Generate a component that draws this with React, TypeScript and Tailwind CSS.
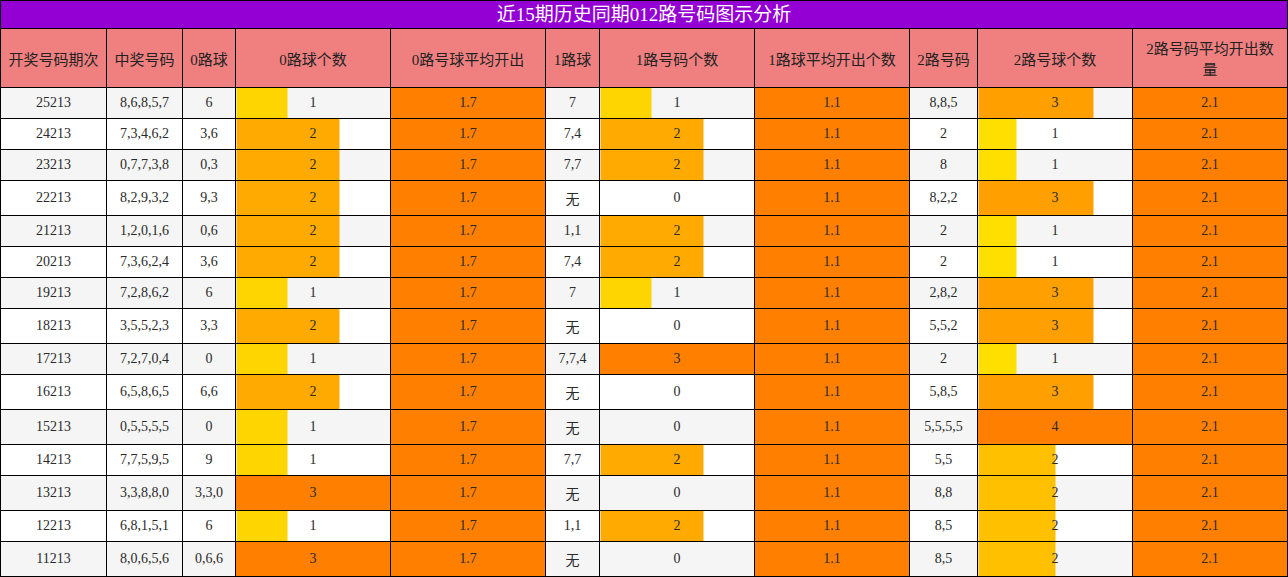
type Row = {
  issue: string
  nums: string
  r0: string
  c0: number
  r1: string
  c1: number
  r2: string
  c2: number
}

const rows: Row[] = [
  { issue: '25213', nums: '8,6,8,5,7', r0: '6', c0: 1, r1: '7', c1: 1, r2: '8,8,5', c2: 3 },
  { issue: '24213', nums: '7,3,4,6,2', r0: '3,6', c0: 2, r1: '7,4', c1: 2, r2: '2', c2: 1 },
  { issue: '23213', nums: '0,7,7,3,8', r0: '0,3', c0: 2, r1: '7,7', c1: 2, r2: '8', c2: 1 },
  { issue: '22213', nums: '8,2,9,3,2', r0: '9,3', c0: 2, r1: '无', c1: 0, r2: '8,2,2', c2: 3 },
  { issue: '21213', nums: '1,2,0,1,6', r0: '0,6', c0: 2, r1: '1,1', c1: 2, r2: '2', c2: 1 },
  { issue: '20213', nums: '7,3,6,2,4', r0: '3,6', c0: 2, r1: '7,4', c1: 2, r2: '2', c2: 1 },
  { issue: '19213', nums: '7,2,8,6,2', r0: '6', c0: 1, r1: '7', c1: 1, r2: '2,8,2', c2: 3 },
  { issue: '18213', nums: '3,5,5,2,3', r0: '3,3', c0: 2, r1: '无', c1: 0, r2: '5,5,2', c2: 3 },
  { issue: '17213', nums: '7,2,7,0,4', r0: '0', c0: 1, r1: '7,7,4', c1: 3, r2: '2', c2: 1 },
  { issue: '16213', nums: '6,5,8,6,5', r0: '6,6', c0: 2, r1: '无', c1: 0, r2: '5,8,5', c2: 3 },
  { issue: '15213', nums: '0,5,5,5,5', r0: '0', c0: 1, r1: '无', c1: 0, r2: '5,5,5,5', c2: 4 },
  { issue: '14213', nums: '7,7,5,9,5', r0: '9', c0: 1, r1: '7,7', c1: 2, r2: '5,5', c2: 2 },
  { issue: '13213', nums: '3,3,8,8,0', r0: '3,3,0', c0: 3, r1: '无', c1: 0, r2: '8,8', c2: 2 },
  { issue: '12213', nums: '6,8,1,5,1', r0: '6', c0: 1, r1: '1,1', c1: 2, r2: '8,5', c2: 2 },
  { issue: '11213', nums: '8,0,6,5,6', r0: '0,6,6', c0: 3, r1: '无', c1: 0, r2: '8,5', c2: 2 },
]

const max0 = Math.max(...rows.map((r) => r.c0))
const max1 = Math.max(...rows.map((r) => r.c1))
const max2 = Math.max(...rows.map((r) => r.c2))

// bar colour goes from yellow to orange as the share grows
function barStyle(count: number, max: number) {
  if (!count) return undefined
  const p = count / max
  const g = Math.round(255 - 127 * p)
  const color = `rgb(255, ${g}, 0)`
  const pct = (p * 100).toFixed(2)
  return { background: `linear-gradient(to right, ${color} ${pct}%, transparent ${pct}%)` }
}

const td = 'border border-black px-1 py-[7px] text-center align-middle'
const th = 'border border-black py-[8px] text-center align-middle font-normal'

const headers = [
  '开奖号码期次',
  '中奖号码',
  '0路球',
  '0路球个数',
  '0路号球平均开出',
  '1路球',
  '1路号码个数',
  '1路球平均开出个数',
  '2路号码',
  '2路号球个数',
  '2路号码平均开出数量',
]

const widths = [106, 76, 53, 155, 155, 54, 155, 155, 68, 155, 155]

export default function App() {
  return (
    <div
      className="w-[1288px] bg-white text-[#2a2a2a]"
      style={{ fontFamily: '"Liberation Serif", "Noto Sans CJK SC", serif' }}
    >
      <table className="w-[1288px] table-fixed border-collapse text-[14px] leading-[normal]">
        <colgroup>
          {widths.map((w, i) => (
            <col key={i} style={{ width: w }} />
          ))}
        </colgroup>
        <thead>
          <tr>
            <th
              colSpan={11}
              className="border border-black bg-[#9400d3] py-0 text-center text-[19px] font-normal leading-[27px] text-white"
            >
              近15期历史同期012路号码图示分析
            </th>
          </tr>
          <tr className="bg-[#f08080] text-[15px] text-[#222]">
            {headers.map((h, i) => (
              <th key={h} className={`${th} ${i === headers.length - 1 ? 'px-3' : 'px-1'}`}>
                {h}
              </th>
            ))}
          </tr>
        </thead>
        <tbody>
          {rows.map((r, i) => (
            <tr key={r.issue} className={i % 2 === 0 ? 'bg-[#f5f5f5]' : 'bg-white'}>
              <td className={td}>{r.issue}</td>
              <td className={td}>{r.nums}</td>
              <td className={td}>{r.r0}</td>
              <td className={td} style={barStyle(r.c0, max0)}>
                {r.c0}
              </td>
              <td className={`${td} bg-[#ff8000]`}>1.7</td>
              <td className={td}>{r.r1}</td>
              <td className={td} style={barStyle(r.c1, max1)}>
                {r.c1}
              </td>
              <td className={`${td} bg-[#ff8000]`}>1.1</td>
              <td className={td}>{r.r2}</td>
              <td className={td} style={barStyle(r.c2, max2)}>
                {r.c2}
              </td>
              <td className={`${td} bg-[#ff8000]`}>2.1</td>
            </tr>
          ))}
        </tbody>
      </table>
    </div>
  )
}
